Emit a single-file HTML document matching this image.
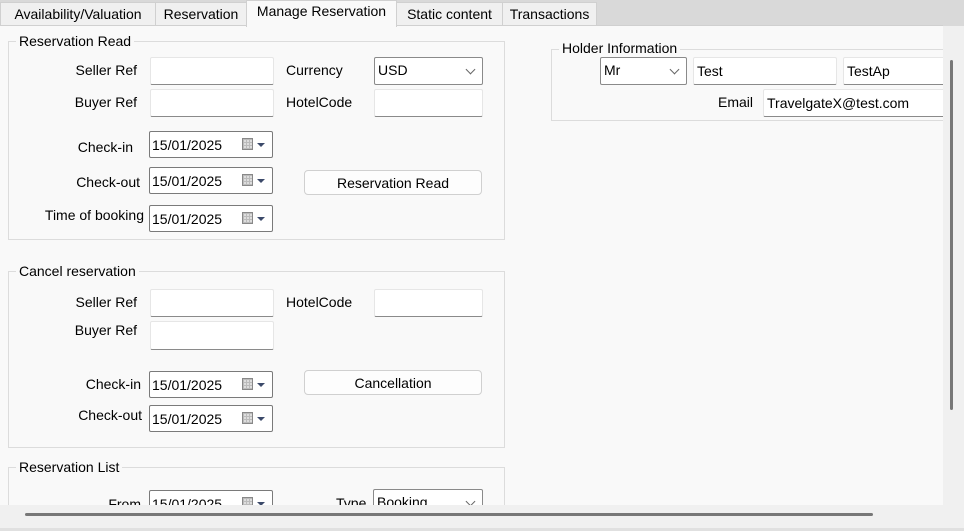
<!DOCTYPE html>
<html><head><meta charset="utf-8"><style>
*{box-sizing:border-box;margin:0;padding:0}
body{width:964px;height:531px;overflow:hidden;background:#f0f0f0;font-family:"Liberation Sans",sans-serif;font-size:14px;color:#000;position:relative}
.a{position:absolute;white-space:nowrap}
.tabbar{position:absolute;left:0;top:0;width:964px;height:26px;background:#d9d9d9}
.tab{position:absolute;top:2px;height:24px;background:#f0f0f0;border:1px solid #d0d0d0;border-bottom:none;padding-top:3px;text-align:center}
.tab.sel{top:0;height:27px;background:#f9f9f9;padding-top:2px;z-index:2}
.content{position:absolute;left:0;top:25px;width:943px;height:480px;background:#f9f9f9;border-top:1px solid #d0d0d0;overflow:hidden}
.grp{position:absolute;border:1px solid #dcdcdc}
.gt{position:absolute;background:#f9f9f9;padding:0 3px;line-height:14px}
.in{position:absolute;background:#fff;border:1px solid #e6e6e6;border-bottom:1px solid #8a8a8a;border-radius:2px;padding:5px 0 0 4px}
.cb{position:absolute;background:#fff;border:1px solid #8a8a8a;border-radius:2px;padding:4px 0 0 3px}
.cb:after{content:"";position:absolute;right:8px;top:8px;width:6px;height:6px;border-right:1px solid #666;border-bottom:1px solid #666;transform:rotate(45deg)}
.dp{position:absolute;background:#fff;border:1px solid #7a7a7a;border-radius:2px;padding:5px 0 0 2px;width:124px;height:27px}
.dp i{position:absolute;left:92px;top:6px;width:11px;height:12px;background:#ddd;border:1px solid #888;background-image:linear-gradient(#bbb 1px,transparent 1px),linear-gradient(90deg,#bbb 1px,transparent 1px);background-size:3px 3px}
.dp b{position:absolute;left:107px;top:11px;border-left:4px solid transparent;border-right:4px solid transparent;border-top:4px solid #3c4a6a}
.btn{position:absolute;background:#fdfdfd;border:1px solid #d0d0d0;border-radius:4px;text-align:center;padding-top:4px}
.lb{position:absolute;text-align:right;white-space:nowrap;width:140px}
</style></head><body>
<div class="tabbar"></div>
<div class="tab" style="left:0;width:156px">Availability/Valuation</div>
<div class="tab" style="left:155px;width:92px">Reservation</div>
<div class="tab sel" style="left:246px;width:151px">Manage Reservation</div>
<div class="tab" style="left:396px;width:107px">Static content</div>
<div class="tab" style="left:502px;width:95px">Transactions</div>
<div class="content">
 <div class="grp" style="left:8px;top:15px;width:497px;height:199px"></div>
 <div class="gt" style="left:16px;top:8px">Reservation Read</div>
 <div class="lb" style="left:-3px;top:36px">Seller Ref</div>
 <div class="lb" style="left:-3px;top:68px">Buyer Ref</div>
 <div class="lb" style="left:-7px;top:113px">Check-in</div>
 <div class="lb" style="left:0px;top:148px">Check-out</div>
 <div class="lb" style="left:4px;top:181px">Time of booking</div>
 <div class="in" style="left:150px;top:31px;width:124px;height:28px"></div>
 <div class="in" style="left:150px;top:63px;width:124px;height:28px"></div>
 <div class="a" style="left:286px;top:36px">Currency</div>
 <div class="a" style="left:286px;top:68px">HotelCode</div>
 <div class="cb" style="left:374px;top:31px;width:109px;height:28px">USD</div>
 <div class="in" style="left:374px;top:63px;width:109px;height:28px"></div>
 <div class="dp" style="left:149px;top:105px">15/01/2025<i></i><b></b></div>
 <div class="dp" style="left:149px;top:141px">15/01/2025<i></i><b></b></div>
 <div class="dp" style="left:149px;top:179px">15/01/2025<i></i><b></b></div>
 <div class="btn" style="left:304px;top:144px;width:178px;height:25px">Reservation Read</div>

 <div class="grp" style="left:8px;top:245px;width:497px;height:177px"></div>
 <div class="gt" style="left:16px;top:238px">Cancel reservation</div>
 <div class="lb" style="left:-3px;top:268px">Seller Ref</div>
 <div class="lb" style="left:-3px;top:296px">Buyer Ref</div>
 <div class="lb" style="left:1px;top:350px">Check-in</div>
 <div class="lb" style="left:2px;top:381px">Check-out</div>
 <div class="in" style="left:150px;top:263px;width:124px;height:28px"></div>
 <div class="in" style="left:150px;top:295px;width:124px;height:29px"></div>
 <div class="a" style="left:286px;top:268px">HotelCode</div>
 <div class="in" style="left:374px;top:263px;width:109px;height:28px"></div>
 <div class="dp" style="left:149px;top:345px">15/01/2025<i></i><b></b></div>
 <div class="dp" style="left:149px;top:379px">15/01/2025<i></i><b></b></div>
 <div class="btn" style="left:304px;top:344px;width:178px;height:25px">Cancellation</div>

 <div class="grp" style="left:8px;top:441px;width:497px;height:60px"></div>
 <div class="gt" style="left:16px;top:434px">Reservation List</div>
 <div class="lb" style="left:1px;top:470px">From</div>
 <div class="dp" style="left:149px;top:464px">15/01/2025<i></i><b></b></div>
 <div class="a" style="left:336px;top:469px">Type</div>
 <div class="cb" style="left:373px;top:463px;width:110px;height:28px">Booking</div>

 <div class="grp" style="left:551px;top:23px;width:400px;height:72px"></div>
 <div class="gt" style="left:559px;top:15px">Holder Information</div>
 <div class="cb" style="left:600px;top:31px;width:87px;height:28px">Mr</div>
 <div class="in" style="left:693px;top:31px;width:144px;height:28px;padding-left:3px">Test</div>
 <div class="in" style="left:843px;top:31px;width:110px;height:28px;padding-left:3px">TestAp</div>
 <div class="a" style="left:718px;top:68px">Email</div>
 <div class="in" style="left:763px;top:63px;width:190px;height:28px;padding-left:3px">TravelgateX@test.com</div>
</div>
<div class="a" style="left:950px;top:60px;width:3px;height:350px;background:#777;border-radius:2px"></div>
<div class="a" style="left:25px;top:513px;width:848px;height:3px;background:#777;border-radius:2px"></div>
<div class="a" style="left:0;top:528px;width:964px;height:3px;background:#e0e0e0"></div>
</body></html>
